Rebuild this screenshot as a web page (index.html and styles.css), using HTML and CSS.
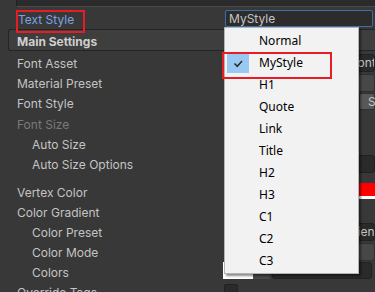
FILE: index.html
```html
<!DOCTYPE html>
<html>
<head>
<meta charset="utf-8">
<link rel="stylesheet" href="styles.css">
</head>
<body>
<div class="panel">
  <div class="topbox"></div>
  <div class="ts-row">
    <span class="label ts">Text Style</span>
    <div class="selfield">MyStyle</div>
  </div>
  <div class="header">Main Settings</div>
  <div class="rows">
    <div class="row"><span class="label">Font Asset</span><div class="obj fa">Font Asset</div></div>
    <div class="row"><span class="label">Material Preset</span><div class="pop"></div></div>
    <div class="row fs"><span class="label">Font Style</span>
      <div class="btns"><span class="btn">B</span><span class="btn">I</span><span class="btn">U</span><span class="btn last">S</span></div>
    </div>
    <div class="row"><span class="label dis">Font Size</span><div class="obj small">36</div></div>
    <div class="row ind"><span class="label">Auto Size</span><div class="toggle"></div></div>
    <div class="row ind"><span class="label">Auto Size Options</span><div class="obj"></div></div>
    <div class="spacer"></div>
    <div class="row"><span class="label">Vertex Color</span><div class="colorf"></div></div>
    <div class="row"><span class="label">Color Gradient</span><div class="toggle"></div></div>
    <div class="row ind"><span class="label">Color Preset</span><div class="obj cp">Gradient</div></div>
    <div class="row ind"><span class="label">Color Mode</span><div class="pop"></div></div>
    <div class="row ind"><span class="label">Colors</span>
      <div class="colors"><span class="sw-white"></span><span class="sw-gray"></span><span class="grad"></span></div>
    </div>
    <div class="row"><span class="label">Override Tags</span><div class="toggle"></div></div>
  </div>
</div>

<div class="mark mark-ts"></div>

<div class="menu">
  <div class="item">Normal</div>
  <div class="item sel"><span class="chk"><svg width="22" height="19" viewBox="0 0 22 19"><path d="M7.5 9.5 L10.3 12.3 L15 7" fill="none" stroke="#2b2b2b" stroke-width="1.5"/></svg></span>MyStyle</div>
  <div class="item">H1</div>
  <div class="item">Quote</div>
  <div class="item">Link</div>
  <div class="item">Title</div>
  <div class="item">H2</div>
  <div class="item">H3</div>
  <div class="item">C1</div>
  <div class="item">C2</div>
  <div class="item">C3</div>
</div>

<div class="mark mark-menu"></div>
</body>
</html>
```

FILE: styles.css
```css
* { box-sizing: border-box; }
html, body { margin: 0; padding: 0; overflow: hidden; }
body {
  width: 375px;
  height: 292px;
  background: #383838;
  font-family: Inter, "Noto Sans", sans-serif;
  font-size: 12px;
  color: #c4c4c4;
  position: relative;
}

.topbox {
  margin-left: 16px;
  height: 7px;
  background: #2b2b2b;
  border-left: 1px solid #1f1f1f;
  border-bottom: 1px solid #4a4a4a;
  border-radius: 0 0 0 3px;
}

.ts-row {
  display: grid;
  grid-template-columns: 225px 1fr;
  height: 22px;
}
.ts-row .label {
  padding-left: 18px;
  padding-top: 3px;
  line-height: 20px;
}
.label.ts { color: #7aa3e2; }
.selfield {
  margin-top: 3px;
  margin-right: 2px;
  height: 17px;
  background: #2c2c2c;
  border: 1px solid #3f6ea6;
  border-radius: 2px;
  padding-left: 3px;
  line-height: 15px;
  color: #c4c4c4;
  white-space: nowrap;
}

.header {
  margin-left: 8px;
  height: 22px;
  background: #3e3e3e;
  border-top: 1px solid #242424;
  border-bottom: 1px solid #242424;
  border-left: 1px solid #242424;
  border-radius: 3px 0 0 3px;
  padding-left: 8px;
  padding-top: 3px;
  line-height: 18px;
  font-weight: 700;
  color: #cfcfcf;
}

.rows { margin-top: 2px; }
.row {
  display: grid;
  grid-template-columns: 207px 1fr;
  padding-left: 17px;
  height: 20px;
}
.row .label { line-height: 22px; white-space: nowrap; }
.row.ind .label { padding-left: 15px; }
.row.fs { height: 21px; }
.label.dis { color: #7a7a7a; }
.spacer { height: 8px; }

.obj {
  margin-top: 1px;
  height: 18px;
  min-width: 0;
  background: #2a2a2a;
  border: 1px solid #212121;
  border-radius: 3px;
  line-height: 16px;
  white-space: nowrap;
  overflow: hidden;
  color: #c4c4c4;
}
.obj.fa { padding-left: 126px; }
.obj.cp { padding-left: 105px; }
.obj.small { width: 100px; padding-left: 3px; }

.pop {
  margin-top: 1px;
  height: 18px;
  background: #474747;
  border: 1px solid #303030;
  border-radius: 3px;
}

.btns {
  display: flex;
  gap: 1px;
  height: 17px;
  min-width: 0;
  overflow: hidden;
}
.btn {
  width: 44px;
  flex: none;
  height: 17px;
  background: #585858;
  border: 1px solid #303030;
  border-radius: 2px;
  padding-left: 8px;
  line-height: 15px;
  color: #c4c4c4;
}
.btn.last { flex: 1 1 auto; width: auto; min-width: 0; }

.toggle {
  margin-top: 2px;
  width: 14px;
  height: 14px;
  background: #2a2a2a;
  border: 1px solid #212121;
  border-radius: 2px;
}

.colorf {
  margin-top: 1px;
  height: 16px;
  background: linear-gradient(to bottom, #ff0000 0, #ff0000 13px, #ffffff 13px, #ffffff 16px);
}

.colors {
  display: flex;
  margin-left: -1px;
  height: 17px;
}
.sw-white { width: 30px; background: #ffffff; }
.sw-gray { width: 17px; background: #4a4a4a; margin-top: 12px; }
.grad {
  flex: 1;
  margin-left: 2px;
  margin-right: 3px;
  background: #2a2a2a;
  border: 1px solid #212121;
  border-radius: 3px;
}

.menu {
  position: absolute;
  left: 224px;
  top: 27px;
  width: 135px;
  height: 247px;
  background: #f2f2f2;
  border: 1px solid #b4b4b4;
  padding-top: 2px;
  box-shadow: 2px 2px 2px rgba(0, 0, 0, 0.45);
  font-family: "Noto Sans", sans-serif;
  font-size: 12px;
  color: #000;
}
.item {
  position: relative;
  height: 22px;
  line-height: 22px;
  padding-left: 34px;
}
.chk {
  position: absolute;
  left: 2px;
  top: 2px;
  width: 22px;
  height: 19px;
  background: #99c9f3;
}
.chk svg { display: block; }

.mark {
  position: absolute;
  border: 2px solid #e81c24;
}
.mark-ts { left: 16px; top: 10px; width: 69px; height: 23px; }
.mark-menu { left: 222px; top: 52px; width: 110px; height: 27px; }
```
